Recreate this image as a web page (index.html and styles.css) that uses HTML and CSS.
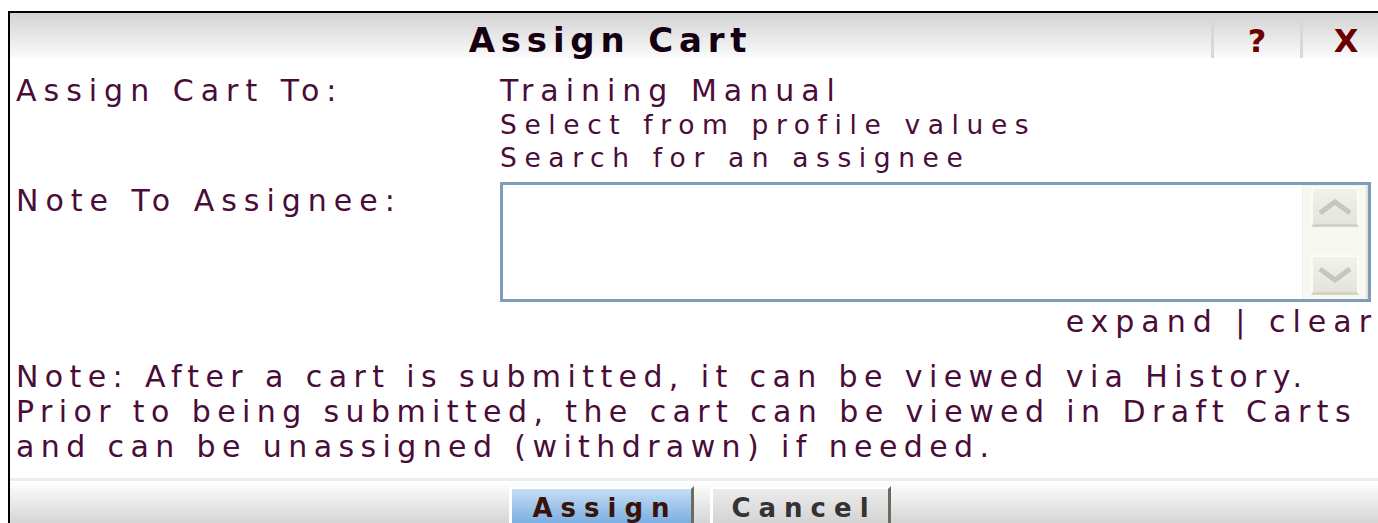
FILE: index.html
```html
<!DOCTYPE html>
<html lang="en">
<head>
<meta charset="utf-8">
<title>Assign Cart</title>
<link rel="stylesheet" href="styles.css">
</head>
<body>
<div class="dialog">
  <div class="dialog-head">
    <div class="dialog-title">Assign Cart</div>
    <div class="head-btn help">?</div>
    <div class="head-btn close">X</div>
  </div>

  <div class="dialog-body">
    <div class="form">
      <div class="label">Assign Cart To:</div>
      <div class="value">
        <div class="assignee">Training Manual</div>
        <a class="link">Select from profile values</a>
        <a class="link">Search for an assignee</a>
      </div>

      <div class="label note-label">Note To Assignee:</div>
      <div class="value">
        <div class="note-box">
          <textarea class="note-input"></textarea>
          <div class="scrollbar">
            <div class="sb-btn">
              <svg viewBox="0 0 36 16" width="36" height="16"><polyline points="3,14 18,3 33,14" fill="none" stroke="#c6c6be" stroke-width="5"/></svg>
            </div>
            <div class="sb-track"></div>
            <div class="sb-btn">
              <svg viewBox="0 0 36 16" width="36" height="16"><polyline points="3,2 18,13 33,2" fill="none" stroke="#c6c6be" stroke-width="5"/></svg>
            </div>
          </div>
        </div>
        <div class="note-actions"><a>expand</a> | <a>clear</a></div>
      </div>
    </div>

    <p class="hint">Note: After a cart is submitted, it can be viewed via History.<br>Prior to being submitted, the cart can be viewed in Draft Carts<br>and can be unassigned (withdrawn) if needed.</p>
  </div>

  <div class="dialog-foot">
    <button class="btn btn-primary" type="button">Assign</button>
    <button class="btn" type="button">Cancel</button>
  </div>
</div>
</body>
</html>
```

FILE: styles.css
```css
html, body {
  overflow: hidden;
}

body {
  margin: 11px 0 0 8px;
  font-family: "DejaVu Sans", Verdana, sans-serif;
  color: #4a0c38;
}

.dialog {
  width: 1379px;
  border: 2px solid #000;
  background: #fff;
}

/* title bar */
.dialog-head {
  display: flex;
  height: 45px;
  background: linear-gradient(#d2d2d2, #fbfbfb);
}

.dialog-title {
  flex: 1;
  padding-top: 10px;
  text-align: center;
  font-size: 34px;
  font-weight: bold;
  line-height: 34px;
  letter-spacing: 5.8px;
  color: #140010;
}

.head-btn {
  width: 86px;
  margin-top: 10px;
  padding-top: 1px;
  border-left: 3px solid #d8d8d8;
  text-align: center;
  font-size: 32px;
  font-weight: bold;
  line-height: 34px;
  color: #6b0000;
}

/* form */
.dialog-body {
  padding: 15px 0 0 6px;
}

.form {
  display: grid;
  grid-template-columns: 484px 871px;
}

.label,
.assignee,
.note-actions,
.hint {
  font-size: 30px;
  line-height: 35px;
  letter-spacing: 7px;
}

.link {
  display: block;
  font-size: 26.5px;
  line-height: 33px;
  letter-spacing: 7.6px;
}

.note-label {
  margin-top: 8px;
  padding-top: 1px;
}

.note-box {
  display: flex;
  box-sizing: border-box;
  height: 120px;
  margin-top: 8px;
  border: 3px solid #7f9db9;
  background: #fff;
}

.note-input {
  flex: 1;
  border: 0;
  padding: 0;
  margin: 0;
  resize: none;
  outline: none;
  background: #fff;
}

/* classic scrollbar beside the note field */
.scrollbar {
  display: flex;
  flex-direction: column;
  width: 48px;
  padding: 0 7px 0 8px;
  background: #f8f8f2;
  border-left: 1px solid #eeeee6;
  border-right: 2px solid #e2e2da;
}

.sb-btn {
  display: flex;
  align-items: center;
  justify-content: center;
  height: 35px;
  margin-top: 2px;
  background: linear-gradient(#f2f2ed, #e4e4dd);
  border: 2px solid #fbfbf7;
  border-bottom: 3px solid #d2d2c6;
}

.sb-btn + .sb-track + .sb-btn {
  margin-top: 0;
  margin-bottom: 4px;
}

.sb-track {
  flex: 1;
}

.note-actions {
  margin-top: 2px;
  margin-right: -7px;
  text-align: right;
}

.hint {
  margin: 20px 0 0;
  white-space: nowrap;
  letter-spacing: 6.4px;
}

/* buttons */
.dialog-foot {
  display: flex;
  align-items: flex-start;
  justify-content: center;
  gap: 16px;
  height: 70px;
  margin-top: 14px;
  padding-top: 5px;
  border-top: 3px solid #ececec;
  background: linear-gradient(#fff, #d2d2d2 45px, #d2d2d2);
}

.btn {
  box-sizing: border-box;
  width: 181px;
  margin: 0;
  padding: 4px 0 20px 8px;
  border: 3px solid;
  border-color: #fff #6f6a5f #6f6a5f #fff;
  background: linear-gradient(#ececec, #cfcfcf 40px, #cfcfcf);
  font-family: "DejaVu Sans", Verdana, sans-serif;
  font-size: 26px;
  font-weight: bold;
  line-height: 30px;
  letter-spacing: 8px;
  text-align: center;
  color: #333;
}

.btn-primary {
  width: 185px;
  background: linear-gradient(#c6ddf3, #6da7df 40px, #6da7df);
  color: #3a1208;
}
```
